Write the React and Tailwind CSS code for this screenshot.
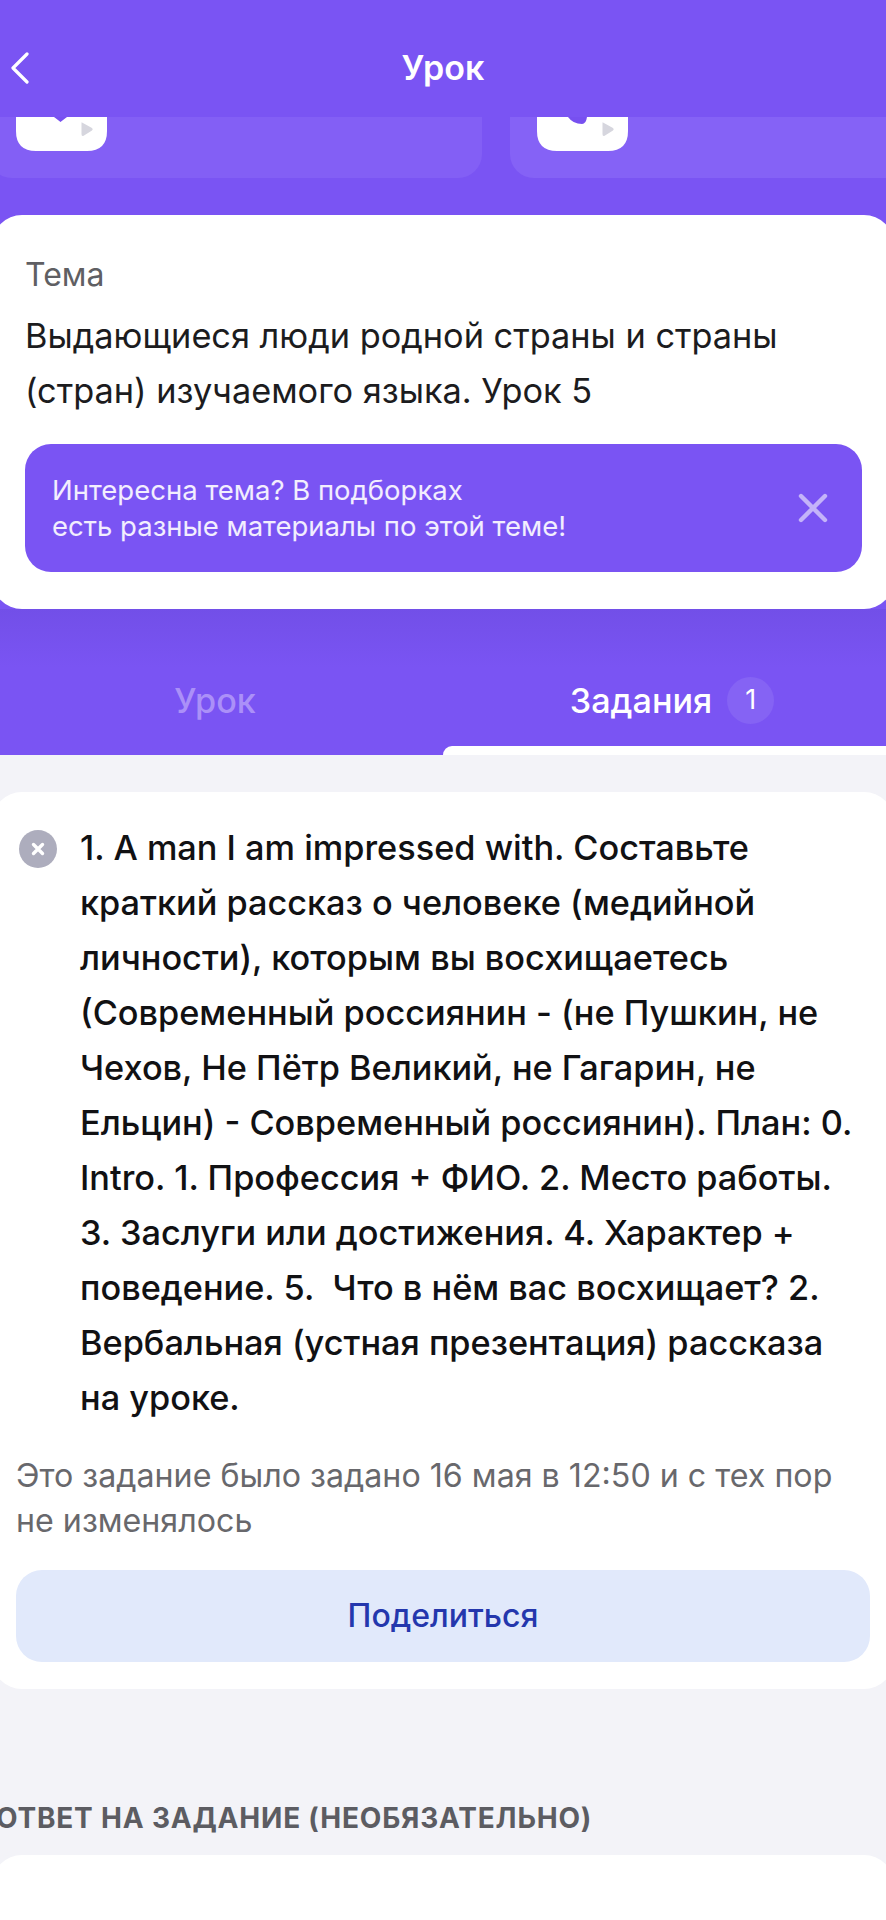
import React from 'react';

const BODY_FONT = 'font-[Inter,"Noto_Sans",sans-serif]';

const VideoThumb = ({ notchPath }) => (
  <svg className="block" width="91" height="34" viewBox="0 0 91 34">
    <path d="M0 0 H91 V14 Q91 34 71 34 H20 Q0 34 0 14 Z" fill="#fff" />
    <path d={notchPath} fill="#7750f0" />
    <path d="M66 5.5 L76 11 Q77.5 12 76 13.5 L68 18.5 Q65.5 20 65.5 17 V6.5 Q65.5 4.5 66 5.5 Z" fill="#d6d6de" />
  </svg>
);

export default function App() {
  return (
    <div className={`w-[886px] h-[1920px] overflow-hidden bg-[#f3f3f8] ${BODY_FONT}`}>
      <div className="bg-[#7a54f3]">
        <header className="h-[117px] flex items-center relative pt-[19px]">
          <svg className="ml-[10px]" width="20" height="32" viewBox="0 0 20 32" fill="none">
            <path d="M17 2 L3 16 L17 30" stroke="#fff" strokeWidth="3.2" strokeLinecap="round" strokeLinejoin="round" />
          </svg>
          <h1 className="absolute left-0 right-0 top-[48px] text-center text-white text-[34px] leading-[40px] font-semibold">Урок</h1>
        </header>

        <div className="flex gap-[28px] -ml-[12px]">
          <div className="w-[494px] shrink-0 h-[61px] pl-[28px] rounded-b-[24px] bg-[#835ff5]">
            <VideoThumb notchPath="M38 0 Q42 3 44.5 5 Q47 3 51 0 Z" />
          </div>
          <div className="flex-1 h-[61px] pl-[27px] rounded-bl-[24px] bg-[#8562f6]">
            <VideoThumb notchPath="M31 0 Q36 7 45 7 Q49 7 50 0 Z" />
          </div>
        </div>

        <section className="mt-[37px] -mx-[8px] h-[394px] bg-white rounded-[30px] pl-[33px] pr-[32px] pt-[40px]">
          <div className="text-[32px] leading-[40px] text-[#5f5f63]">Тема</div>
          <p className="mt-[13px] text-[34.3px] leading-[55px] text-[#1c1c1e]">
            Выдающиеся люди родной страны и страны
            <br />
            (стран) изучаемого языка. Урок 5
          </p>
          <div className="mt-[26px] h-[128px] bg-[#7a54f3] rounded-[26px] pl-[27px] pr-[34px] flex items-center justify-between">
            <p className="text-[27.5px] leading-[36px] text-white/90">
              Интересна тема? В подборках
              <br />
              есть разные материалы по этой теме!
            </p>
            <svg width="30" height="30" viewBox="0 0 30 30" fill="none">
              <path d="M3 3 L27 27 M27 3 L3 27" stroke="#c4b3f9" strokeWidth="4.4" strokeLinecap="round" />
            </svg>
          </div>
        </section>

        <nav className="h-[146px] flex flex-col bg-gradient-to-b from-[#724fe8] to-[#7a54f3] to-40%">
          <div className="flex-1 flex pt-[64px]">
            <div className="w-[430px] text-center text-[34.2px] leading-[56px] text-[#ab90f8] font-medium">Урок</div>
            <div className="flex-1 flex justify-center items-start gap-[15px]">
              <span className="text-[34.2px] leading-[56px] text-white font-medium ml-[28px]">Задания</span>
              <span className="w-[47px] h-[47px] mt-[4px] rounded-full bg-[#8563f4] text-white text-[27px] flex items-center justify-center">1</span>
            </div>
          </div>
          <div className="h-[9px] ml-[443px] bg-white rounded-tl-[14px]" />
        </nav>
      </div>

      <section className="mt-[37px] -mx-[8px] h-[897px] bg-white rounded-[30px] pl-[8px] pr-[8px] pt-[28px] flex flex-col">
        <div className="flex">
          <div className="w-[80px] shrink-0 pl-[19px] pt-[10px]">
            <div className="w-[38px] h-[38px] rounded-full bg-[#adadbd] flex items-center justify-center">
              <svg width="14" height="14" viewBox="0 0 14 14" fill="none">
                <path d="M2.5 2.5 L11.5 11.5 M11.5 2.5 L2.5 11.5" stroke="#fff" strokeWidth="3.4" strokeLinecap="round" />
              </svg>
            </div>
          </div>
          <p className="flex-1 pr-[6px] text-[34.3px] leading-[55px] font-medium text-[#111113] whitespace-pre-line">
            {`1. A man I am impressed with. Составьте
краткий рассказ о человеке (медийной
личности), которым вы восхищаетесь
(Современный россиянин - (не Пушкин, не
Чехов, Не Пётр Великий, не Гагарин, не
Ельцин) - Современный россиянин). План: 0.
Intro. 1. Профессия + ФИО. 2. Место работы.
3. Заслуги или достижения. 4. Характер +
поведение. 5.\u00A0 Что в нём вас восхищает? 2.
Вербальная (устная презентация) рассказа
на уроке.`}
          </p>
        </div>
        <p className="mt-[28px] px-[16px] text-[32.2px] leading-[45px] text-[#68686c] whitespace-nowrap">
          Это задание было задано 16 мая в 12:50 и с тех пор
          <br />
          не изменялось
        </p>
        <button className="mt-[27px] mx-[16px] h-[92px] rounded-[26px] bg-[#e1e9fb] text-[#2437ad] text-[32px] font-medium">
          Поделиться
        </button>
      </section>

      <h2 className="mt-[111px] -ml-[4px] whitespace-nowrap text-[28px] leading-[36px] font-bold tracking-[0.8px] text-[#5c5c62]">
        ОТВЕТ НА ЗАДАНИЕ (НЕОБЯЗАТЕЛЬНО)
      </h2>
      <div className="mt-[19px] -mx-[8px] h-[200px] bg-white rounded-[30px]" />
    </div>
  );
}
